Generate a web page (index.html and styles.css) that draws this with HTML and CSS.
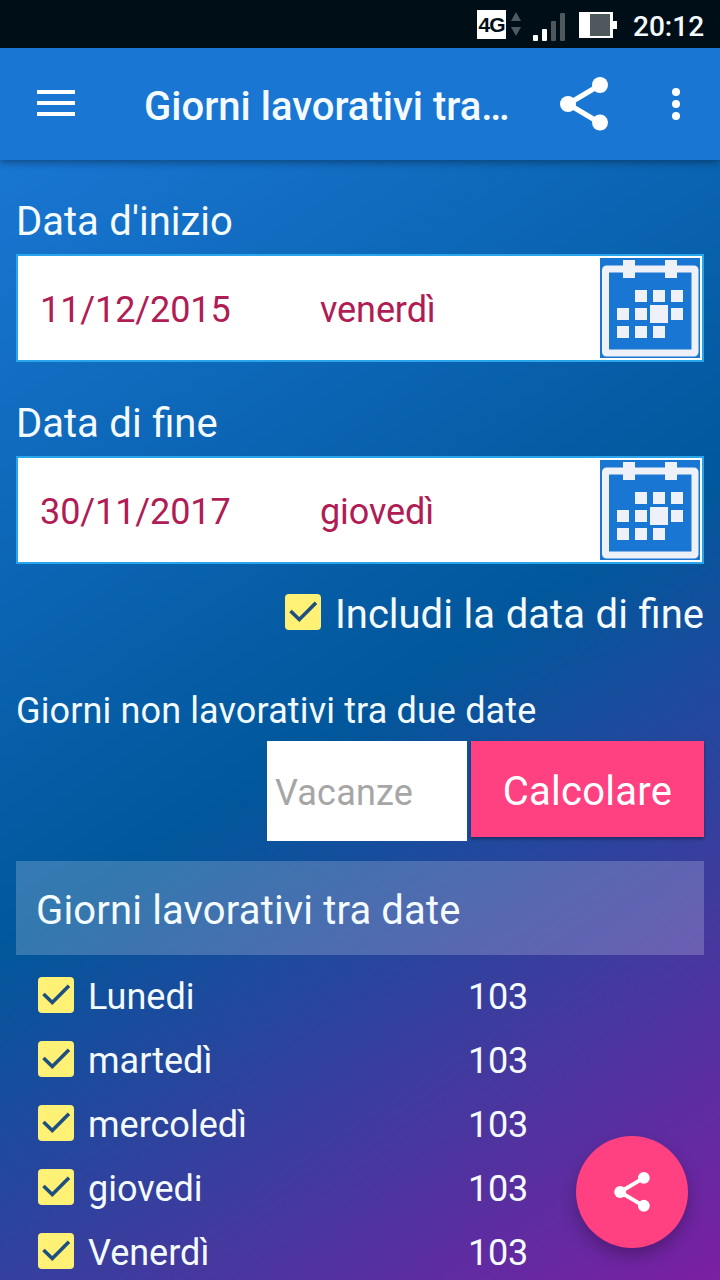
FILE: index.html
```html
<!DOCTYPE html>
<html lang="it">
<head>
    <meta charset="UTF-8">
    <meta name="viewport" content="width=device-width, initial-scale=1.0">
    <title>Giorni lavorativi tra date</title>
    <link rel="stylesheet" href="styles.css">
</head>
<body>
    <!-- Icons used more than once -->
    <svg class="icon-defs" width="0" height="0">
        <symbol id="share" viewBox="0 0 48 54">
            <path d="M8 27L40 8M8 27L40 46" stroke="#fff" stroke-width="5.2" />
            <circle cx="8" cy="27" r="8" fill="#fff" />
            <circle cx="40" cy="8" r="8" fill="#fff" />
            <circle cx="40" cy="45.5" r="8" fill="#fff" />
        </symbol>
        <symbol id="check" viewBox="0 0 36 36">
            <path d="M5.5 17L14.3 25.5L31 8.8" fill="none" stroke="#1d4f80" stroke-width="3.6" />
        </symbol>
        <symbol id="calendar" viewBox="0 0 100 100">
            <rect width="100" height="100" fill="#1976d2" />
            <rect x="5.5" y="11" width="89.5" height="84" rx="1" fill="none" stroke="#eef1f7" stroke-width="7" />
            <path fill="#eef1f7" d="M23 2h12v18h-12zM65 2h12v18h-12zM35 32h12v12h-12zM53 32h12v12h-12zM71 32h12v12h-12zM17 50h12v12h-12zM35 50h12v12h-12zM71 50h12v12h-12zM17 68h12v12h-12zM35 68h12v12h-12zM53 68h12v12h-12zM50 47h18v18h-18z" />
        </symbol>
    </svg>

    <div class="status-bar">
        <span class="network">4G</span>
        <svg class="arrows" width="10" height="26" viewBox="0 0 10 26">
            <path d="M0 9L5 0L10 9zM0 15H10L5 24z" fill="#4f585c" />
        </svg>
        <svg class="signal" width="34" height="28" viewBox="0 0 34 28">
            <rect x="1" y="22" width="5" height="6" rx="1" fill="#fff" />
            <rect x="10" y="16" width="5" height="12" rx="1" fill="#fff" />
            <rect x="19" y="8" width="5" height="20" rx="1" fill="#4f585c" />
            <rect x="28" y="0" width="5" height="28" rx="1" fill="#4f585c" />
        </svg>
        <svg class="battery" width="38" height="26" viewBox="0 0 38 26">
            <path d="M0 0H34V9H38V17H34V26H0z" fill="#fff" />
            <rect x="11" y="2" width="20" height="22" fill="#4f585c" />
        </svg>
        <span class="clock">20:12</span>
    </div>

    <header class="toolbar">
        <svg class="menu" width="38" height="28" viewBox="0 0 38 28">
            <path d="M0 2H38M0 13H38M0 24H38" stroke="#fff" stroke-width="4" />
        </svg>
        <h1>Giorni lavorativi tra…</h1>
        <svg class="share" width="48" height="54"><use href="#share" /></svg>
        <svg class="more" width="8" height="32" viewBox="0 0 8 32">
            <circle cx="4" cy="4" r="4" fill="#fff" />
            <circle cx="4" cy="16" r="4" fill="#fff" />
            <circle cx="4" cy="28" r="4" fill="#fff" />
        </svg>
    </header>

    <main class="content">
        <div class="label">Data d'inizio</div>
        <div class="date-box">
            <span class="date">11/12/2015</span>
            <span class="day">venerdì</span>
            <svg width="100" height="100"><use href="#calendar" /></svg>
        </div>

        <div class="label label-end">Data di fine</div>
        <div class="date-box">
            <span class="date">30/11/2017</span>
            <span class="day">giovedì</span>
            <svg width="100" height="100"><use href="#calendar" /></svg>
        </div>

        <div class="include">
            <svg class="checkbox"><use href="#check" /></svg>
            <span>Includi la data di fine</span>
        </div>

        <div class="holidays-label">Giorni non lavorativi tra due date</div>
        <div class="holidays">
            <input type="text" placeholder="Vacanze">
            <button>Calcolare</button>
        </div>

        <h2>Giorni lavorativi tra date</h2>
        <ul class="days">
            <li><svg class="checkbox"><use href="#check" /></svg><span class="name">Lunedi</span><span class="count">103</span></li>
            <li><svg class="checkbox"><use href="#check" /></svg><span class="name">martedì</span><span class="count">103</span></li>
            <li><svg class="checkbox"><use href="#check" /></svg><span class="name">mercoledì</span><span class="count">103</span></li>
            <li><svg class="checkbox"><use href="#check" /></svg><span class="name">giovedi</span><span class="count">103</span></li>
            <li><svg class="checkbox"><use href="#check" /></svg><span class="name">Venerdì</span><span class="count">103</span></li>
        </ul>
    </main>

    <!-- Floating share button -->
    <button class="fab">
        <svg width="36" height="40"><use href="#share" /></svg>
    </button>
</body>
</html>
```
FILE: styles.css
```css
* {
    margin: 0;
    padding: 0;
    box-sizing: border-box;
}

body {
    width: 720px;
    height: 1280px;
    overflow: hidden;
    font-family: Roboto, sans-serif;
    color: #f4fbff;
}

svg {
    display: block;
    flex-shrink: 0;
}

.icon-defs {
    position: absolute;
}

/* Status bar */
.status-bar {
    display: flex;
    align-items: center;
    height: 48px;
    padding-left: 477px;
    background-color: #000f17;
}

.network {
    width: 29px;
    height: 29px;
    background-color: #fff;
    color: #000f17;
    font-family: "Liberation Sans", sans-serif;
    font-size: 21px;
    font-weight: bold;
    line-height: 30px;
    letter-spacing: -1px;
    text-align: center;
}

.arrows {
    margin: 2px 0 0 5px;
}

.signal {
    margin: 6px 0 0 11px;
}

.battery {
    margin: 2px 0 0 13px;
}

.clock {
    margin: 6px 0 0 16px;
    font-size: 28px;
    font-weight: 500;
    line-height: 32px;
}

/* Toolbar */
.toolbar {
    position: relative;
    display: flex;
    align-items: center;
    height: 112px;
    padding: 0 40px 0 37px;
    background-color: #1976d2;
    box-shadow: 0 2px 8px rgba(0, 0, 0, 0.4);
}

.toolbar h1 {
    flex: 1;
    margin: 5px 0 0 69px;
    font-size: 40px;
    font-weight: 500;
    line-height: 48px;
    white-space: nowrap;
}

.toolbar .more {
    margin-left: 64px;
}

.content {
    height: 1120px;
    padding: 38px 16px 0;
    background: linear-gradient(147deg, #1976d2, #01579b 50%, #7b1fa2);
}

/* Dates */
.label {
    height: 56px;
    font-size: 40px;
    line-height: 48px;
    word-spacing: 0.6px;
}

.label-end {
    margin-top: 38px;
}

.date-box {
    display: flex;
    align-items: center;
    height: 108px;
    padding-left: 22px;
    background-color: #fff;
    border: 2px solid #29a5ec;
    color: #b01c54;
    font-size: 36px;
    letter-spacing: -0.1px;
}

.date-box span {
    width: 280px;
    padding-top: 4px;
}

.checkbox {
    width: 36px;
    height: 36px;
    border-radius: 4px;
    background-color: #fff176;
}

.include {
    display: flex;
    justify-content: flex-end;
    gap: 14px;
    margin-top: 27px;
    font-size: 40px;
    line-height: 48px;
    word-spacing: 0.75px;
}

.include .checkbox {
    margin-top: 3px;
}

/* Holidays */
.holidays-label {
    margin-top: 50px;
    font-size: 36px;
    line-height: 44px;
    letter-spacing: 0.13px;
}

.holidays {
    display: flex;
    justify-content: flex-end;
    gap: 4px;
    margin-top: 8px;
}

.holidays input {
    width: 200px;
    height: 100px;
    padding: 4px 8px 0;
    border: none;
    background-color: #fff;
    font-family: inherit;
    font-size: 36px;
    letter-spacing: 0.2px;
}

.holidays input::placeholder {
    color: #a6a6a6;
}

.holidays button {
    width: 233px;
    height: 96px;
    padding-top: 4px;
    border: none;
    background-color: #ff4081;
    box-shadow: 0 2px 3px rgba(0, 0, 0, 0.35);
    color: #fff;
    font-family: inherit;
    font-size: 40px;
    letter-spacing: 0.25px;
}

/* Results */
h2 {
    height: 94px;
    margin-top: 20px;
    padding: 3px 20px 0;
    background-color: rgba(255, 255, 255, 0.2);
    font-size: 40px;
    font-weight: 400;
    line-height: 94px;
    letter-spacing: 0.15px;
}

.days {
    margin-top: 8px;
    list-style: none;
}

.days li {
    display: flex;
    align-items: center;
    height: 64px;
    padding-left: 22px;
    font-size: 36px;
}

.days .name {
    width: 380px;
    margin-left: 14px;
    padding-top: 4px;
}

.days .count {
    padding-top: 4px;
    letter-spacing: -0.2px;
}

.fab {
    position: absolute;
    left: 576px;
    top: 1136px;
    display: flex;
    align-items: center;
    justify-content: center;
    width: 112px;
    height: 112px;
    border: none;
    border-radius: 50%;
    background-color: #ff4081;
    box-shadow: 0 8px 16px rgba(0, 0, 0, 0.25);
}
```
